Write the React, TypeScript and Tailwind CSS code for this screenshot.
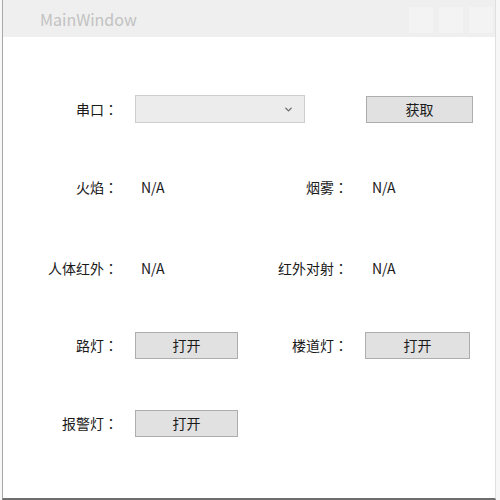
import { ChevronDown } from 'lucide-react';

const font = { fontFamily: '"Noto Sans CJK SC", "Noto Sans", sans-serif' };
const colonFont = { fontFamily: '"Noto Sans CJK TC", sans-serif' };

function LabelText({ text }: { text: string }) {
  return (
    <span className="whitespace-nowrap text-[14px] text-[#1a1a1a] leading-none">
      {text}
      <span style={colonFont}>：</span>
    </span>
  );
}

function Label({ text, width }: { text: string; width: string }) {
  return (
    <div className={`${width} flex justify-end`}>
      <LabelText text={text} />
    </div>
  );
}

function Btn({ text, width }: { text: string; width: string }) {
  return (
    <button className={`${width} h-[27px] bg-[#e1e1e1] border border-[#adadad] text-[14px] text-[#1a1a1a] leading-none`}>
      {text}
    </button>
  );
}

function Value({ text, width }: { text: string; width: string }) {
  return <div className={`${width} pl-[6px] text-[14px] text-[#1a1a1a] leading-none`}>{text}</div>;
}

export default function App() {
  return (
    <div className="w-[500px] h-[500px] bg-[#f7f7f7]" style={font}>
      <div className="ml-[2px] w-[494px] h-[500px] flex flex-col bg-white border-l border-[#a8a8a8] border-r border-r-[#e0e0e0] border-b-2 border-b-[#6e6e6e]">
        <div className="h-[37px] shrink-0 bg-[#efefef] flex items-center">
          <span className="ml-[37px] text-[16px] text-[#c2c2c2]">MainWindow</span>
          <div className="ml-auto flex gap-[6px] mr-[2px] self-start mt-[7px]">
            <div className="w-[24px] h-[26px] bg-[#f3f3f3]" />
            <div className="w-[24px] h-[26px] bg-[#f3f3f3]" />
            <div className="w-[24px] h-[26px] bg-[#f3f3f3]" />
          </div>
        </div>

        <div className="flex flex-col">
          <div className="flex items-center h-[28px] mt-[58px]">
            <Label text="串口" width="w-[115px]" />
            <div className="ml-[17px] w-[170px] h-[28px] bg-[#ececec] border border-[#cdcdcd] flex items-center justify-end pr-[10px]">
              <ChevronDown className="w-[11px] h-[11px] text-[#6a6a6a]" strokeWidth={3} />
            </div>
            <div className="w-[43px]" />
            <div className="ml-[18px]">
              <Btn text="获取" width="w-[107px]" />
            </div>
          </div>

          <div className="flex items-center h-[28px] mt-[50px]">
            <Label text="火焰" width="w-[115px]" />
            <div className="ml-[17px]">
              <Value text="N/A" width="w-[170px]" />
            </div>
            <Label text="烟雾" width="w-[43px]" />
            <div className="ml-[18px]">
              <Value text="N/A" width="w-[107px]" />
            </div>
          </div>

          <div className="flex items-center h-[28px] mt-[53px]">
            <Label text="人体红外" width="w-[115px]" />
            <div className="ml-[17px]">
              <Value text="N/A" width="w-[170px]" />
            </div>
            <Label text="红外对射" width="w-[43px]" />
            <div className="ml-[18px]">
              <Value text="N/A" width="w-[107px]" />
            </div>
          </div>

          <div className="flex items-center h-[28px] mt-[49px]">
            <Label text="路灯" width="w-[115px]" />
            <div className="ml-[17px] w-[170px]">
              <Btn text="打开" width="w-[103px]" />
            </div>
            <Label text="楼道灯" width="w-[43px]" />
            <div className="ml-[17px]">
              <Btn text="打开" width="w-[105px]" />
            </div>
          </div>

          <div className="flex items-center h-[28px] mt-[50px]">
            <Label text="报警灯" width="w-[115px]" />
            <div className="ml-[17px]">
              <Btn text="打开" width="w-[103px]" />
            </div>
          </div>
        </div>
      </div>
    </div>
  );
}
